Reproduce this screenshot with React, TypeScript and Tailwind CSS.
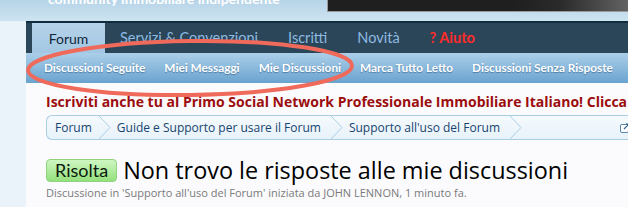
export default function App() {
  const tabs = ['Servizi & Convenzioni', 'Iscritti', 'Novità'];
  const sub = ['Discussioni Seguite', 'Miei Messaggi', 'Mie Discussioni', 'Marca Tutto Letto', 'Discussioni Senza Risposte'];
  const crumbs = ['Forum', 'Guide e Supporto per usare il Forum', "Supporto all'uso del Forum"];

  return (
    <div className="relative h-[207px] w-[628px] overflow-hidden bg-[#e9f3f9] font-['Lato',sans-serif]">
      {/* header */}
      <div className="relative h-[21px] bg-gradient-to-b from-[#b6d4e8] to-[#cde3f0]">
        <div className="absolute left-[48px] top-[-8px] whitespace-nowrap text-[14px] font-bold leading-none text-white">
          community immobiliare indipendente
        </div>
        <div className="absolute left-[327px] top-[-2px] h-[14px] w-[310px] border border-[#9a9a9a] bg-gradient-to-r from-[#1f1f1f] from-60% via-[#2a2a2a] via-75% to-[#6a6a6a]" />
      </div>

      {/* nav */}
      <div className="ml-[26px] flex h-[32px] border-t-2 border-[#102a3e] bg-[#2c4659] pl-[6px]">
        <div className="flex h-full w-[73px] items-center justify-center bg-gradient-to-b from-[#b6d3e9] to-[#a2c7e3] text-[14px] text-[#14263a]">
          Forum
        </div>
        {tabs.map((t) => (
          <div key={t} className="flex h-full items-center whitespace-nowrap px-[15px] text-[14.5px] text-[#8dbbe2]">
            {t}
          </div>
        ))}
        <div className="flex h-full items-center whitespace-nowrap px-[15px] text-[14.5px] font-bold text-[#ff2b2b]">? Aiuto</div>
      </div>

      {/* subnav */}
      <div className="ml-[26px] flex h-[30px] items-center gap-[19px] bg-gradient-to-b from-[#abcfe9] to-[#6aa3cf] pl-[18px]">
        {sub.map((s) => (
          <span key={s} className="whitespace-nowrap text-[11.8px] font-bold text-white [text-shadow:0_1px_1px_rgba(40,80,120,0.55)]">
            {s}
          </span>
        ))}
      </div>

      {/* content */}
      <div className="ml-[26px] h-[124px] bg-[#fbfbfd] pl-[20px] pt-[10px]">
        <div className="whitespace-nowrap font-['Open_Sans',sans-serif] text-[14px] font-bold leading-[18px] text-[#9c0d0d]">
          Iscriviti anche tu al Primo Social Network Professionale Immobiliare Italiano! Clicca
        </div>
        <div className="mt-[4px] flex h-[25px] items-center rounded-l-[6px] border border-r-0 border-[#a9cde3] bg-gradient-to-b from-[#f5fafd] to-[#e7f2fa] font-['Open_Sans',sans-serif]">
          {crumbs.map((c, i) => (
            <div key={c} className="flex h-full items-center">
              <span className={`${i === 0 ? 'pl-[8px] pr-[7px]' : 'pl-[6px] pr-[10px]'} whitespace-nowrap text-[12px] text-[#17446e]`}>{c}</span>
              <svg width="12" height="23" viewBox="0 0 12 23" className="shrink-0">
                <path d="M0 0 L11 11.5 L0 23" fill="none" stroke="#a9cde3" strokeWidth="1" />
              </svg>
            </div>
          ))}
          <div className="flex-1" />
          <svg width="10" height="10" viewBox="0 0 10 10" className="mr-[-2px] shrink-0">
            <rect x="0.5" y="1.5" width="8" height="8" rx="1.5" fill="#fff" stroke="#5c86ad" />
            <path d="M4 6 L9 1 M6 1 H9 V4" fill="none" stroke="#2d5f8e" strokeWidth="1.2" />
          </svg>
        </div>

        <div className="mt-[18px] flex items-center gap-[6px]">
          <span className="rounded-[4px] border border-[#8fd37d] bg-gradient-to-b from-[#cff6c2] to-[#94e07d] px-[8px] text-[18px] leading-[21px] text-[#0c1a0c]">
            Risolta
          </span>
          <span className="whitespace-nowrap font-['Open_Sans',sans-serif] text-[23.4px] leading-[24px] text-black">
            Non trovo le risposte alle mie discussioni
          </span>
        </div>
        <div className="mt-[4px] whitespace-nowrap font-['Open_Sans',sans-serif] text-[11px] leading-[13px] text-[#7a7a7a]">
          Discussione in 'Supporto all'uso del Forum' iniziata da JOHN LENNON, 1 minuto fa.
        </div>
      </div>

      {/* red highlight */}
      <svg className="pointer-events-none absolute left-0 top-0" width="628" height="207">
        <ellipse cx="190" cy="68" rx="162" ry="27" fill="none" stroke="#ef6a5b" strokeWidth="4" transform="rotate(-0.8 190 68)" />
      </svg>
    </div>
  );
}
